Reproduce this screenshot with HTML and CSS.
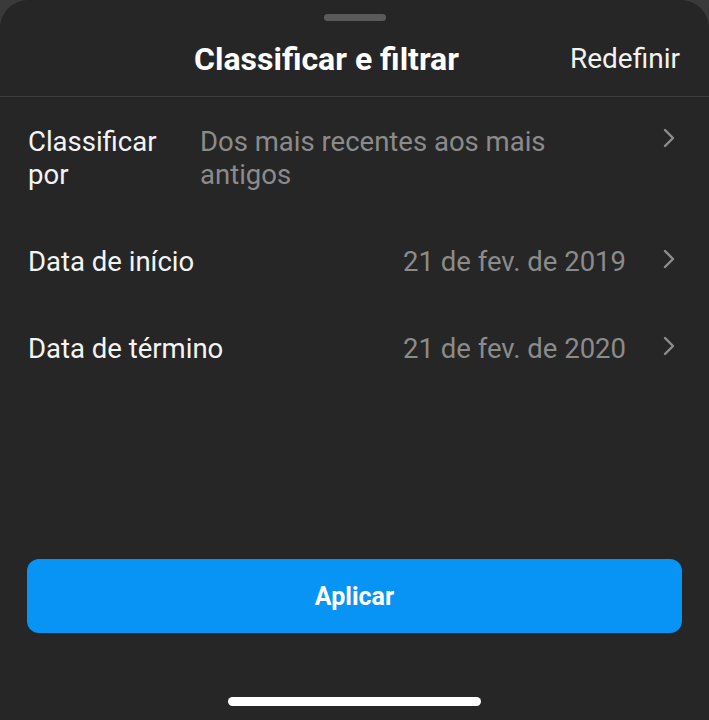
FILE: index.html
```html
<!DOCTYPE html>
<html>
<head>
    <title>Classificar e filtrar</title>
    <link rel="stylesheet" href="styles.css">
</head>
<body>
    <div class="sheet">
        <div class="grabber"></div>

        <div class="header">
            <h2>Classificar e filtrar</h2>
            <a class="reset">Redefinir</a>
        </div>

        <div class="options">
            <div class="option sort">
                <span class="label">Classificar por</span>
                <span class="value">Dos mais recentes aos mais antigos</span>
                <svg class="chevron" viewBox="0 0 14 22" width="14" height="22">
                    <path d="M3 3 L11 11 L3 19" fill="none" stroke="#8e8e8e" stroke-width="2.4" stroke-linecap="round" stroke-linejoin="round"/>
                </svg>
            </div>
            <div class="option">
                <span class="label">Data de início</span>
                <span class="value right">21 de fev. de 2019</span>
                <svg class="chevron" viewBox="0 0 14 22" width="14" height="22">
                    <path d="M3 3 L11 11 L3 19" fill="none" stroke="#8e8e8e" stroke-width="2.4" stroke-linecap="round" stroke-linejoin="round"/>
                </svg>
            </div>
            <div class="option">
                <span class="label">Data de término</span>
                <span class="value right">21 de fev. de 2020</span>
                <svg class="chevron" viewBox="0 0 14 22" width="14" height="22">
                    <path d="M3 3 L11 11 L3 19" fill="none" stroke="#8e8e8e" stroke-width="2.4" stroke-linecap="round" stroke-linejoin="round"/>
                </svg>
            </div>
        </div>

        <button class="apply">Aplicar</button>

        <div class="home-bar"></div>
    </div>
</body>
</html>
```

FILE: styles.css
```css
html, body {
    margin: 0;
    padding: 0;
    background-color: #3a3a3a;
}

body {
    font-family: Roboto, "Liberation Sans", sans-serif;
    color: #fff;
}

.sheet {
    background-color: #262626;
    border-radius: 28px 28px 0 0;
    height: 720px;
    box-sizing: border-box;
    display: flex;
    flex-direction: column;
}

.grabber {
    width: 62px;
    height: 7px;
    border-radius: 4px;
    background-color: #5a5a5a;
    margin: 14px auto 0;
}

.header {
    display: flex;
    align-items: center;
    justify-content: center;
    height: 75px;
    border-bottom: 1px solid #3d3d3d;
    position: relative;
}

h2 {
    margin: 0 56px 0 0;
    font-size: 32px;
    font-weight: 700;
}

.reset {
    position: absolute;
    right: 29px;
    font-size: 28px;
    color: #f2f2f2;
}

.options {
    padding: 28px 28px 0 28px;
}

.option {
    display: flex;
    align-items: center;
    font-size: 27.5px;
    line-height: 33px;
    height: 87px;
}

.option.sort {
    align-items: flex-start;
    height: 93px;
}

.label {
    flex: none;
    color: #f4f4f4;
}

.sort .label {
    width: 172px;
}

.value {
    flex: 1;
    color: #8b8b8b;
}

.sort .value {
    padding-right: 60px;
}

.value.right {
    text-align: right;
    padding-right: 36px;
}

.chevron {
    flex: none;
    margin-right: 5px;
    margin-top: -6px;
}

.sort .chevron {
    margin-top: 2px;
}

.apply {
    margin: auto 27px 0;
    height: 74px;
    border: none;
    border-radius: 12px;
    background-color: #0894f4;
    color: #fff;
    font-family: Roboto, "Liberation Sans", sans-serif;
    font-size: 25px;
    font-weight: 700;
}

.home-bar {
    width: 253px;
    height: 9px;
    border-radius: 5px;
    background-color: #fff;
    margin: 64px auto 14px;
}
```
